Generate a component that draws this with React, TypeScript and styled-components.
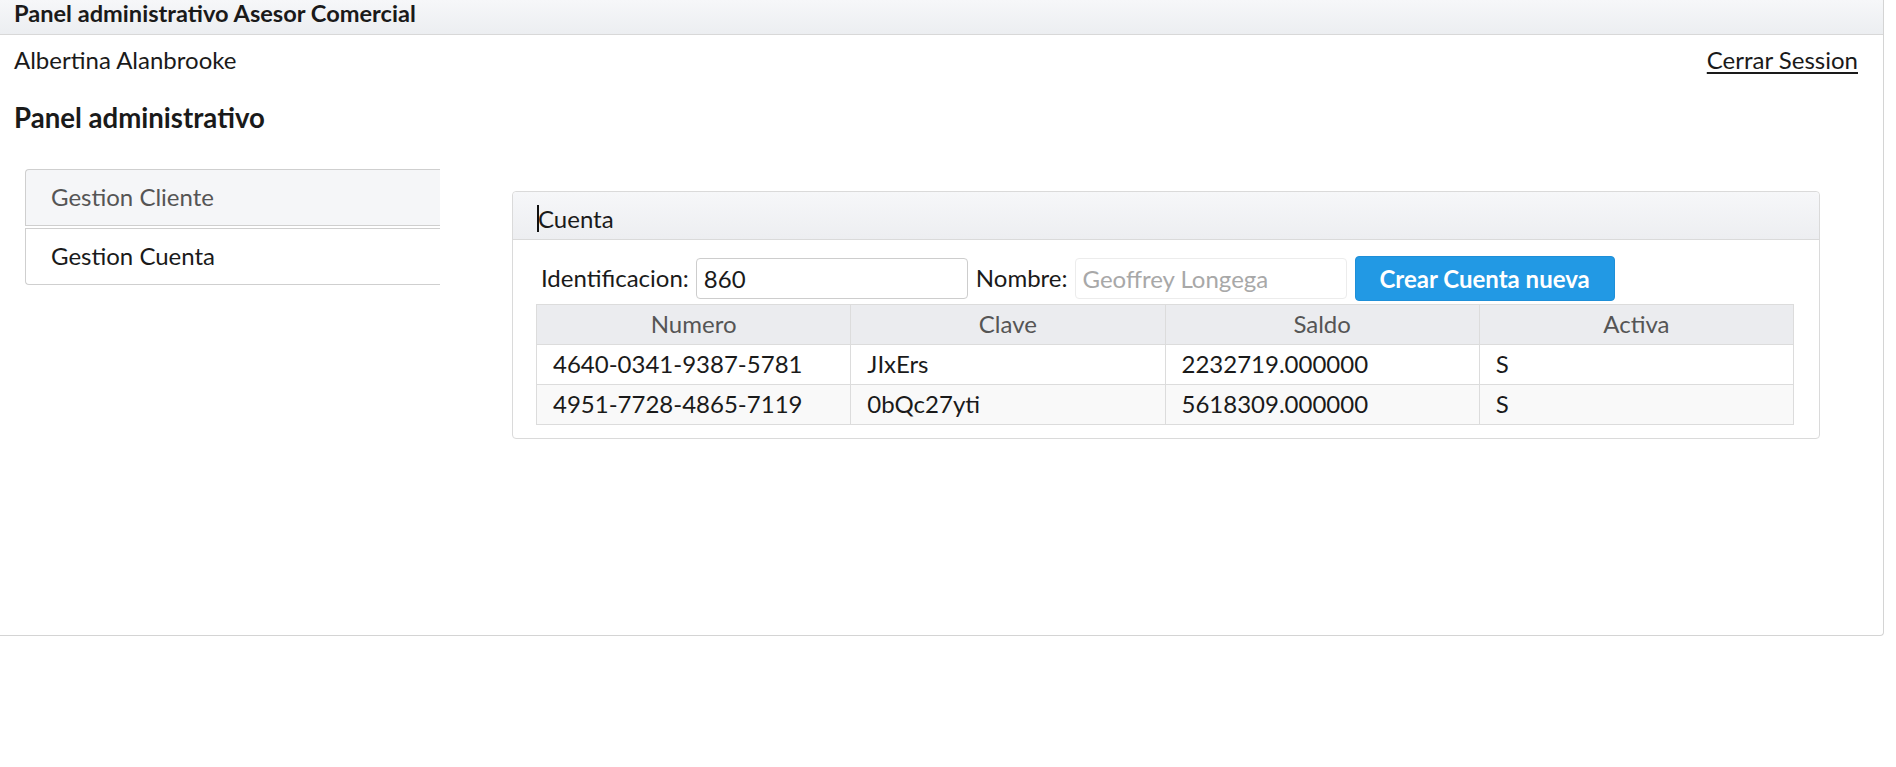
import React from "react";
import styled, { createGlobalStyle } from "styled-components";

const GlobalStyle = createGlobalStyle`
  html, body { margin: 0; padding: 0; background: #fff; }
  body {
    font-family: Lato, "Open Sans", "Liberation Sans", sans-serif;
    color: #222;
    line-height: 1.2;
  }
  * { box-sizing: border-box; }
`;

const Frame = styled.div`
  margin-right: 12px;
  min-height: 636px;
  border-right: 1px solid #d4d4d4;
  border-bottom: 1px solid #d4d4d4;
  border-bottom-right-radius: 4px;
  display: flex;
  flex-direction: column;
`;

const TopBar = styled.div`
  height: 35px;
  padding: 0 14px;
  line-height: 26px;
  font-size: 23.6px;
  font-weight: 700;
  color: #1a1a1a;
  background: linear-gradient(#f6f7f9, #eceef1);
  border-bottom: 1px solid #d8d8d8;
`;

const UserRow = styled.div`
  display: flex;
  justify-content: space-between;
  align-items: baseline;
  margin-top: 11px;
  padding: 0 25px 0 14px;
  font-size: 24px;
  color: #1a1a1a;
`;

const LogoutLink = styled.a`
  color: #1a1a1a;
  text-decoration: underline;
  text-decoration-thickness: 2px;
  text-underline-offset: 3px;
  cursor: pointer;
`;

const Heading = styled.h2`
  margin: 26px 0 0 14px;
  font-size: 27.6px;
  font-weight: 700;
  color: #1a1a1a;
`;

const Content = styled.div`
  display: flex;
  align-items: flex-start;
  margin-top: 35px;
`;

const SideColumn = styled.nav`
  width: 440px;
  flex: none;
  padding-left: 25px;
  display: flex;
  flex-direction: column;
  gap: 2px;
`;

const NavItem = styled.div<{ $first?: boolean; $active?: boolean }>`
  height: 57px;
  display: flex;
  align-items: center;
  padding-left: 25px;
  font-size: 24px;
  color: ${(p) => (p.$active ? "#1a1a1a" : "#555")};
  background: ${(p) => (p.$active ? "#fff" : "#f5f6f8")};
  border: 1px solid #cfcfcf;
  border-right: none;
  border-radius: ${(p) => (p.$first ? "4px 0 0 0" : "0 0 0 4px")};
`;

const Panel = styled.section`
  flex: 1;
  margin: 22px 63px 0 72px;
  border: 1px solid #dadada;
  border-radius: 4px;
`;

const PanelHeader = styled.div`
  height: 48px;
  padding: 13px 24px 0;
  font-size: 24px;
  color: #1a1a1a;
  background: linear-gradient(#f6f7f9, #edeef1);
  border-bottom: 1px solid #dadada;
  border-radius: 4px 4px 0 0;

  &::before {
    content: "";
    display: inline-block;
    width: 2px;
    height: 27px;
    margin-right: -1px;
    vertical-align: top;
    background: #111;
  }
`;

const PanelBody = styled.div`
  padding: 16px 25px 13px 23px;
`;

const FormRow = styled.div`
  display: flex;
  align-items: center;
  padding-left: 5px;
`;

const Label = styled.label`
  font-size: 24px;
  color: #1a1a1a;
  margin-right: 7px;
`;

const TextInput = styled.input<{ $readOnlyLook?: boolean }>`
  width: 272px;
  height: 41px;
  margin-right: 8px;
  padding: 0 7px;
  font-family: inherit;
  font-size: 24px;
  color: ${(p) => (p.$readOnlyLook ? "#a8a8a8" : "#1a1a1a")};
  background: #fff;
  border: 1px solid ${(p) => (p.$readOnlyLook ? "#ececec" : "#cdcdcd")};
  border-radius: 4px;
  outline: none;
`;

const PrimaryButton = styled.button`
  height: 45px;
  padding: 0 24px;
  font-family: inherit;
  font-size: 24px;
  font-weight: 700;
  color: #fff;
  background: #2299e4;
  border: 1px solid #1e8fd8;
  border-radius: 4px;
  cursor: pointer;
`;

const Table = styled.table`
  width: 100%;
  margin-top: 3px;
  border-collapse: collapse;
  table-layout: fixed;
  font-size: 24px;
`;

const HeadCell = styled.th`
  height: 40px;
  padding: 0 16px;
  font-weight: 400;
  color: #555;
  text-align: center;
  background: #ebecef;
  border: 1px solid #dcdcdc;
`;

const Row = styled.tr<{ $striped?: boolean }>`
  background: ${(p) => (p.$striped ? "#f9f9f9" : "#fff")};
`;

const Cell = styled.td`
  height: 40px;
  padding: 0 16px;
  color: #1a1a1a;
  text-align: left;
  border: 1px solid #dcdcdc;
`;

const cuentas = [
  { numero: "4640-0341-9387-5781", clave: "JIxErs", saldo: "2232719.000000", activa: "S" },
  { numero: "4951-7728-4865-7119", clave: "0bQc27yti", saldo: "5618309.000000", activa: "S" },
];

export default function App() {
  return (
    <>
      <GlobalStyle />
      <Frame>
        <TopBar>Panel administrativo Asesor Comercial</TopBar>
        <UserRow>
          <span>Albertina Alanbrooke</span>
          <LogoutLink>Cerrar Session</LogoutLink>
        </UserRow>
        <Heading>Panel administrativo</Heading>
        <Content>
          <SideColumn>
            <NavItem $first>Gestion Cliente</NavItem>
            <NavItem $active>Gestion Cuenta</NavItem>
          </SideColumn>
          <Panel>
            <PanelHeader>Cuenta</PanelHeader>
            <PanelBody>
              <FormRow>
                <Label>Identificacion:</Label>
                <TextInput defaultValue="860" />
                <Label>Nombre:</Label>
                <TextInput $readOnlyLook readOnly defaultValue="Geoffrey Longega" />
                <PrimaryButton>Crear Cuenta nueva</PrimaryButton>
              </FormRow>
              <Table>
                <thead>
                  <tr>
                    <HeadCell>Numero</HeadCell>
                    <HeadCell>Clave</HeadCell>
                    <HeadCell>Saldo</HeadCell>
                    <HeadCell>Activa</HeadCell>
                  </tr>
                </thead>
                <tbody>
                  {cuentas.map((c, i) => (
                    <Row key={c.numero} $striped={i % 2 === 1}>
                      <Cell>{c.numero}</Cell>
                      <Cell>{c.clave}</Cell>
                      <Cell>{c.saldo}</Cell>
                      <Cell>{c.activa}</Cell>
                    </Row>
                  ))}
                </tbody>
              </Table>
            </PanelBody>
          </Panel>
        </Content>
      </Frame>
    </>
  );
}
